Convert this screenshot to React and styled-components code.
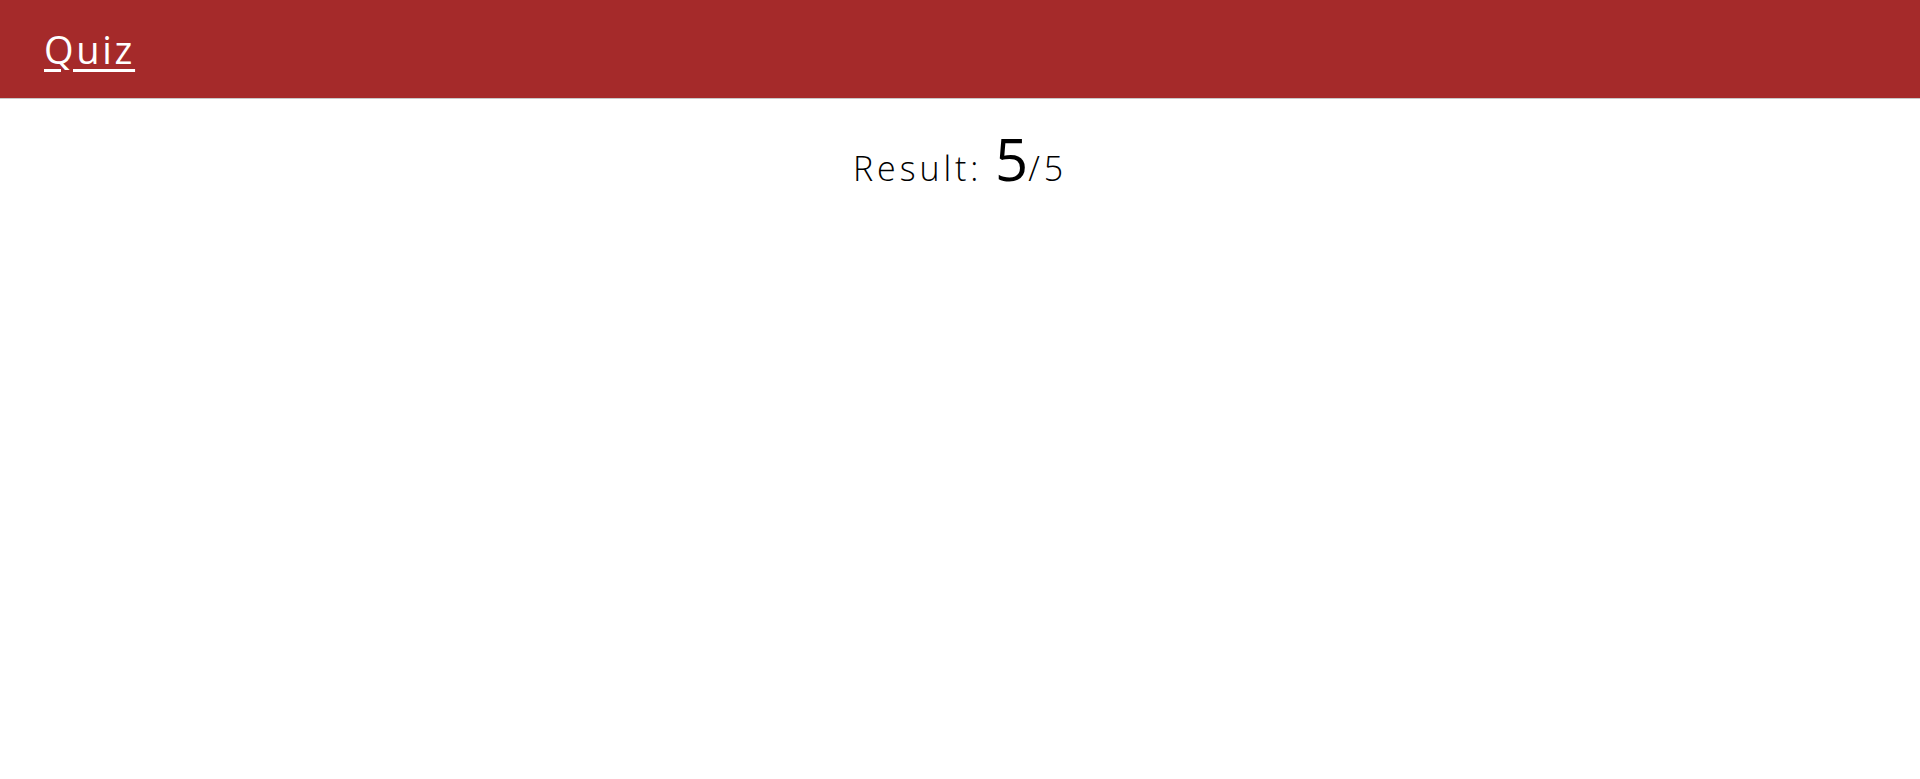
import React from "react";
import styled, { createGlobalStyle } from "styled-components";

const Global = createGlobalStyle`
  html, body { margin: 0; padding: 0; background: #fff; }
  body { font-family: "Open Sans", "Noto Sans", sans-serif; }
`;

const Header = styled.header`
  height: 98px;
  background: #a52a2a;
  border-bottom: 1px solid #c8c8c8;
  display: flex;
  align-items: center;
  padding: 0 44px;
`;

const Brand = styled.a`
  color: #fff;
  font-size: 38px;
  font-weight: 400;
  letter-spacing: 2.7px;
  text-decoration: underline;
  text-underline-offset: 5px;
  text-decoration-thickness: 3px;
  cursor: pointer;
`;

const Main = styled.main`
  display: flex;
  justify-content: center;
  padding-top: 20px;
`;

const Result = styled.h2`
  margin: 0;
  font-weight: 300;
  font-size: 34px;
  letter-spacing: 3.9px;
  color: #000;
`;

const Score = styled.span`
  font-size: 58px;
  font-weight: 400;
  letter-spacing: 0;
`;

export default function App() {
  return (
    <>
      <Global />
      <Header>
        <Brand>Quiz</Brand>
      </Header>
      <Main>
        <Result>
          Result: <Score>5</Score>/5
        </Result>
      </Main>
    </>
  );
}
